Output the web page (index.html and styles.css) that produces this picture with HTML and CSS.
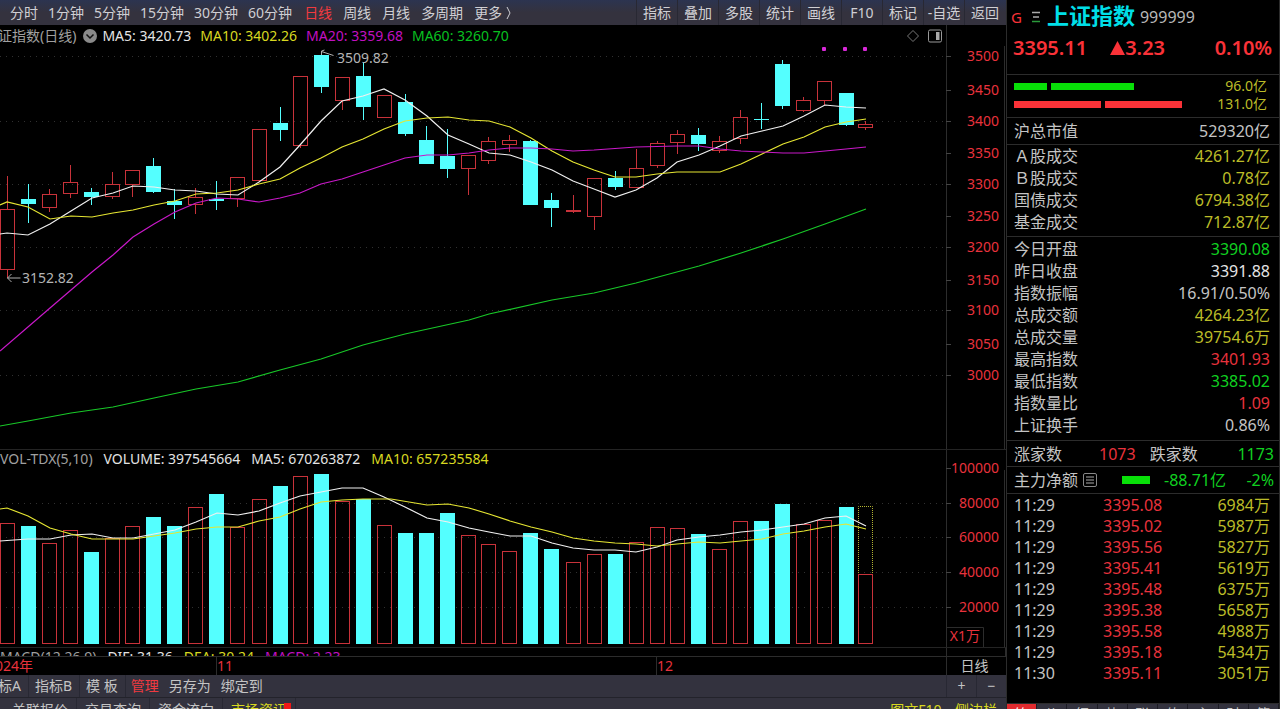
FILE: index.html
```html
<!DOCTYPE html>
<html lang="zh-CN">
<head>
<meta charset="utf-8">
<title>上证指数 999999</title>
<link rel="stylesheet" href="styles.css">
</head>
<body>
<div class="app">
  <main class="main">
    <nav class="toolbar">
      <div class="periods">
        <button>分时</button><button>1分钟</button><button>5分钟</button><button>15分钟</button><button>30分钟</button><button>60分钟</button>
      </div>
      <div class="periods periods-long">
        <button class="active">日线</button><button>周线</button><button>月线</button><button>多周期</button><button class="more">更多
          <svg width="6" height="14" viewBox="0 0 6 14"><path d="M1 1l3 6-3 6" fill="none" stroke="currentColor"/></svg></button>
      </div>
      <div class="tools">
        <button>指标</button><button>叠加</button><button>多股</button><button>统计</button><button>画线</button><button>F10</button><button>标记</button><button>-自选</button><button>返回</button>
      </div>
    </nav>

    <section class="panel price-panel">
      <header class="legend">
        <div class="legend-items shifted">
          <span class="dim">上证指数(日线)</span>
          <button class="fold" aria-label="展开">
            <svg width="14" height="14" viewBox="0 0 14 14"><circle cx="7" cy="7" r="7" fill="#8a8a8a"/><path d="M3.5 5.5L7 9l3.500-3.500" fill="none" stroke="#111" stroke-width="1.500"/></svg>
          </button>
          <span class="white">MA5: 3420.73</span>
          <span class="yellow">MA10: 3402.26</span>
          <span class="magenta">MA20: 3359.68</span>
          <span class="green">MA60: 3260.70</span>
        </div>
        <div class="legend-icons">
          <svg width="14" height="14" viewBox="0 0 14 14"><path d="M7 1.500L12.500 7 7 12.500 1.500 7z" fill="none" stroke="#777"/></svg>
          <svg width="14" height="14" viewBox="0 0 14 14"><rect x="0.500" y="1" width="13" height="12" rx="1.500" fill="none" stroke="#999"/><rect x="8" y="3" width="3.500" height="8" fill="#aaa"/></svg>
        </div>
        <div class="axis-gap"></div>
      </header>
      <svg id="price" class="chart" viewBox="0 46 1006 403"></svg>
    </section>

    <section class="panel volume-panel">
      <header class="legend">
        <div class="legend-items">
          <span class="dim">VOL-TDX(5,10)</span>
          <span class="white">VOLUME: 397545664</span>
          <span class="white">MA5: 670263872</span>
          <span class="yellow">MA10: 657235584</span>
        </div>
        <div class="axis-gap"></div>
      </header>
      <svg id="volume" class="chart" viewBox="0 470 1006 177"></svg>
    </section>

    <section class="panel macd-panel">
      <header class="legend">
        <div class="legend-items">
          <span class="dim">MACD(12,26,9)</span>
          <span class="white">DIF: 31.36</span>
          <span class="yellow">DEA: 30.24</span>
          <span class="magenta">MACD: 2.23</span>
        </div>
        <div class="axis-gap boxed"></div>
      </header>
    </section>

    <div class="dates">
      <div class="date-track">
        <span class="date year">2024年</span><span class="date nov">11</span><span class="date dec">12</span>
      </div>
      <div class="date-unit">日线</div>
    </div>

    <nav class="strip indicators">
      <div class="strip-items">
        <button class="clipped">指标A</button><button>指标B</button><button>模 板</button><button class="active">管理</button><button>另存为</button><button>绑定到</button>
      </div>
      <div class="zoomers"><button>+</button><button>−</button></div>
    </nav>
    <nav class="strip pages">
      <div class="page-items">
        <button>关联报价</button><button>交易查询</button><button>资金流向</button><button class="yellow news">市场资讯<i class="badge"></i></button>
      </div>
      <div class="page-items page-right"><button class="yellow">图文F10</button><button class="yellow">侧边栏</button></div>
    </nav>
  </main>

  <aside class="side">
    <header class="quote">
      <div class="quote-name">
        <span class="flag">G</span>
        <svg width="10" height="12" viewBox="0 0 10 12"><path d="M1 1.500h8M2 6h6" stroke="#aaa" stroke-width="1.300"/><path d="M1 10.500h8" stroke="#2a9a3a" stroke-width="1.500"/></svg>
        <h1>上证指数</h1><span class="code">999999</span>
      </div>
      <div class="quote-price">
        <span>3395.11</span><span class="change"><svg width="15" height="14" viewBox="0 0 15 14"><path d="M7.500 0L15 14H0z" fill="currentColor"/></svg>3.23</span><span class="percent">0.10%</span>
      </div>
    </header>
    <section class="flows">
      <div class="flow"><i class="bar g1"></i><i class="bar g2"></i><span>96.0亿</span></div>
      <div class="flow"><i class="bar r1"></i><i class="bar r2"></i><span>131.0亿</span></div>
    </section>
    <section class="block single">
      <table><tr><th>沪总市值</th><td>529320亿</td></tr></table>
    </section>
    <section class="block">
      <table>
        <tr><th>Ａ股成交</th><td class="olive">4261.27亿</td></tr>
        <tr><th>Ｂ股成交</th><td class="olive">0.78亿</td></tr>
        <tr><th>国债成交</th><td class="olive">6794.38亿</td></tr>
        <tr><th>基金成交</th><td class="olive">712.87亿</td></tr>
      </table>
    </section>
    <section class="block">
      <table>
        <tr><th>今日开盘</th><td class="lime">3390.08</td></tr>
        <tr><th>昨日收盘</th><td class="white">3391.88</td></tr>
        <tr><th>指数振幅</th><td>16.91/0.50%</td></tr>
        <tr><th>总成交额</th><td class="olive">4264.23亿</td></tr>
        <tr><th>总成交量</th><td class="olive">39754.6万</td></tr>
        <tr><th>最高指数</th><td class="red">3401.93</td></tr>
        <tr><th>最低指数</th><td class="lime">3385.02</td></tr>
        <tr><th>指数量比</th><td class="red">1.09</td></tr>
        <tr><th>上证换手</th><td>0.86%</td></tr>
      </table>
    </section>
    <section class="counts">
      <span>涨家数</span><span class="red up">1073</span><span class="fall">跌家数</span><span class="lime end">1173</span>
    </section>
    <section class="counts net">
      <span>主力净额</span>
      <svg width="14" height="14" viewBox="0 0 14 14"><rect x="0.500" y="0.500" width="13" height="13" rx="1.500" fill="none" stroke="#888"/><path d="M3 4h8M3 7h8M3 10h8" stroke="#aaa"/></svg>
      <i class="net-bar"></i><span class="lime net-value">-88.71亿</span><span class="lime end">-2%</span>
    </section>
    <section class="ticks">
      <table>
        <tr><td>11:29</td><td class="red">3395.08</td><td class="olive">6984万</td></tr>
        <tr><td>11:29</td><td class="red">3395.02</td><td class="olive">5987万</td></tr>
        <tr><td>11:29</td><td class="red">3395.56</td><td class="olive">5827万</td></tr>
        <tr><td>11:29</td><td class="red">3395.41</td><td class="olive">5619万</td></tr>
        <tr><td>11:29</td><td class="red">3395.48</td><td class="olive">6375万</td></tr>
        <tr><td>11:29</td><td class="red">3395.38</td><td class="olive">5658万</td></tr>
        <tr><td>11:29</td><td class="red">3395.58</td><td class="olive">4988万</td></tr>
        <tr><td>11:29</td><td class="red">3395.18</td><td class="olive">5434万</td></tr>
        <tr><td>11:30</td><td class="red">3395.11</td><td class="olive">3051万</td></tr>
      </table>
    </section>
    <nav class="side-tabs">
      <button class="on">笔</button><button>价</button><button>细</button><button>势</button><button>联</button><button>值</button><button>主</button><button>财</button><button>筹</button>
    </nav>
  </aside>
</div>
<script src="chart.js"></script>
</body>
</html>
```
FILE: styles.css
```css
* { box-sizing: border-box; }
body {
  margin: 0;
  background: #000;
  color: #c4c4c4;
  font: 14px/20px "Noto Sans", "Noto Sans CJK SC", sans-serif;
}
button {
  padding: 0;
  border: 0;
  background: none;
  color: inherit;
  font: inherit;
  white-space: nowrap;
  cursor: pointer;
}
table { width: 100%; border-collapse: collapse; }
th, td { padding: 0; font-weight: 400; text-align: left; white-space: nowrap; }
svg { flex: none; }

.app {
  display: grid;
  grid-template-columns: minmax(0, 1fr) 274px;
  height: 100vh;
  overflow: hidden;
}
.main { display: flex; flex-direction: column; min-width: 0; overflow: hidden; }
.main > * { flex: none; }

.white { color: #e4e4e4; }
.dim { color: #a0a0a0; }
.yellow { color: #d8d820; }
.magenta { color: #c010c0; }
.green { color: #08c020; }
.red { color: #e8323c; }
.lime { color: #10d020; }
.olive { color: #bcbc28; }

/* top toolbar */
.toolbar {
  display: flex;
  height: 25px;
  background: linear-gradient(#2c3450, #34323e 50%);
  color: #cfcfd4;
}
.periods { display: flex; gap: 10px; padding-left: 10px; }
.periods-long { gap: 11px; padding-left: 12px; }
.more { display: flex; align-items: center; gap: 4px; }
.active { color: #f03a40; }
.tools { display: flex; margin-left: auto; padding-right: 1px; }
.tools button { width: 41px; border-left: 1px solid #282833; }

/* chart panels */
.panel { border-top: 1px solid #242424; }
.price-panel { border-top: 0; }
.legend { display: flex; height: 21px; line-height: 20px; }
.legend-items { display: flex; align-items: center; gap: 11px; flex: 1; min-width: 0; white-space: nowrap; }
.shifted { gap: 9px; margin-left: -16px; }
.fold { display: flex; margin: 0 -4px 0 -2px; }
.legend-icons { display: flex; align-items: center; gap: 8px; padding-right: 4px; }
.axis-gap { width: 60px; border-left: 1px solid #2c2c2c; }
.chart { display: block; width: 100%; height: auto; overflow: visible; }
.chart text { font-size: 14px; }
.volume-panel .legend { height: 20px; line-height: 18px; align-items: flex-start; }
.volume-panel .axis-gap { height: 20px; }
.macd-panel { height: 9px; overflow: hidden; }
.macd-panel .legend { height: 17px; line-height: 16px; }
.boxed { border-right: 1px solid #2c2c2c; }

/* date axis */
.dates { display: flex; height: 19px; border-top: 1px solid #2c2c2c; line-height: 18px; }
.date-track { display: flex; flex: 1; overflow: hidden; color: #e8323c; }
.year { flex: 0 0 216px; text-indent: -13px; }
.nov { flex: 0 0 440px; border-left: 1px solid #2c2c2c; }
.dec { border-left: 1px solid #2c2c2c; }
.date-unit { width: 60px; padding-right: 4px; border-left: 1px solid #2c2c2c; text-align: center; }

/* bottom strips */
.strip { display: flex; height: 23px; background: #33323e; border-bottom: 1px solid #23232b; line-height: 22px; }
.strip-items { display: flex; flex: 1; }
.strip-items button { padding: 0 5px; }
.strip-items button:nth-child(-n+3) { padding: 0 7px 0 6px; border-right: 1px solid #282833; }
.strip-items .clipped { margin-left: -22px; }
.zoomers { display: flex; width: 60px; }
.zoomers button { flex: 1; border-left: 1px solid #282833; }
.pages { justify-content: space-between; height: 25px; line-height: 24px; }
.page-items { display: flex; padding-left: 4px; }
.page-items button { width: 73px; border-right: 1px solid #282833; }
.page-items .news { position: relative; }
.badge { position: absolute; top: 5px; right: 4px; width: 7px; height: 7px; background: #f01818; }
.page-right button { width: 60px; border-right: 0; }

/* quote sidebar */
.side {
  display: flex;
  flex-direction: column;
  overflow: hidden;
  border-left: 1px solid #2c2c2c;
  border-right: 1px solid #2c2c2c;
  font-size: 16px;
  line-height: 22px;
}
.side > * { flex: none; border-bottom: 1px solid #2c2c2c; }
.quote { height: 75px; color: #fa3238; }
.quote-name { display: flex; align-items: center; gap: 9px; height: 33px; padding-left: 4px; }
.flag { font-size: 15px; }
h1 { margin: 0 0 0 -3px; padding-bottom: 5px; color: #00dfe8; font: 700 22px/28px "Noto Sans CJK SC", sans-serif; }
.code { margin-left: -4px; color: #b8b8b8; }
.quote-price { display: flex; align-items: center; height: 30px; padding: 0 7px 0 6px; font-size: 20px; font-weight: 600; }
.change { display: flex; align-items: center; margin-left: 23px; }
.percent { margin-left: auto; }
.flows { display: flex; flex-direction: column; height: 43px; padding: 2px 12px 0 7px; font-size: 14px; color: #bcbc28; }
.flow { display: flex; gap: 4px; align-items: center; height: 18px; }
.flow span { margin-left: auto; }
.bar { height: 7px; background: #08e008; }
.g1 { width: 33px; }
.g2 { width: 83px; }
.r1, .r2 { background: #fa3238; }
.r1 { width: 87px; }
.r2 { width: 77px; }
.block { padding: 2px 9px 2px 7px; }
.block + .block { padding-top: 0; padding-bottom: 3px; }
.block + .block + .block { padding-top: 1px; padding-bottom: 4px; }
.block td { text-align: right; }
.block td, .block th { height: 22px; }
.counts { display: flex; align-items: center; height: 26px; padding: 0 5px 0 7px; }
.up { margin-left: 37px; }
.fall { margin-left: 14px; }
.end { margin-left: auto; }
.net { height: 27px; }
.net svg { margin-left: 5px; }
.net-bar { width: 28px; height: 8px; margin-left: 25px; background: #08e008; }
.net-value { margin-left: 14px; }
.ticks { flex: 1; padding: 1px 9px 0 7px; }
.ticks td { height: 21px; line-height: 21px; }
.ticks td:nth-child(1) { width: 89px; }
.ticks td:nth-child(2) { width: 90px; }
.ticks td:nth-child(3) { text-align: right; }
.side-tabs { display: flex; height: 5px; overflow: hidden; border: 0; background: #33323e; font-size: 14px; line-height: 20px; }
.side-tabs button { flex: 1; height: 20px; border-right: 1px solid #1c1c24; }
.side-tabs .on { background: #e02a2e; color: #fff; }
```
FILE: chart.js
```js
const RED = '#c8323a', CYAN = '#54ffff', GRID = '#2c2c2c';

// x, kind (1 = rise, 0 = fall), high, body top, body bottom, low, volume top
const days = [
  [7,1,176,209,270,278,523],[28,0,184,199,204,223,526],[49,1,189,194,208,212,543],[70,1,165,182,194,198,530],
  [91,0,188,192,197,205,552],[112,1,172,184,197,199,538],[132,1,170,170,185,197,526],[153,0,158,166,192,193,517],
  [174,0,189,201,205,219,526],[195,1,188,197,205,214,507],[216,0,181,199,201,210,494],[237,1,177,177,199,207,527],
  [259,1,129,129,181,181,499],[280,0,107,123,130,141,486],[300,1,76,76,146,148,476],[321,0,52,55,87,93,474],
  [342,1,77,77,101,110,501],[363,0,63,76,107,120,499],[384,1,95,95,118,118,525],[405,0,94,102,134,136,533],
  [426,0,126,140,164,164,533],[447,0,129,156,169,178,513],[468,1,155,155,169,195,535],[488,1,137,141,161,164,544],
  [509,1,135,140,145,152,551],[530,0,140,141,205,205,533],[551,0,193,200,208,227,549],[573,1,195,210,212,213,562],
  [594,1,178,178,217,230,554],[615,0,171,178,187,190,554],[636,1,149,168,188,188,542],[657,1,141,143,166,168,527],
  [677,1,130,134,143,154,528],[698,0,128,135,144,151,534],[719,1,136,141,151,153,549],[740,1,110,117,139,144,521],
  [761,0,103,119,120,129,521],[782,0,60,64,106,109,504],[803,1,97,100,111,112,524],[824,1,81,81,101,105,520],
  [846,0,93,93,125,126,507],[865,1,121,124,128,130,574]
];

const priceLines = {
  '#f0f0f0': '0,234 7,233 28,235 50,224 71,211 92,198 113,193 133,186 154,187 175,190 196,191 217,194 238,195 259,182 280,167 300,145 321,121 342,101 363,96 384,89 405,100 427,116 448,135 469,144 489,153 510,155 531,162 552,170 573,181 594,189 615,197 636,190 657,178 677,162 699,155 720,146 741,136 762,131 783,126 804,116 825,105 846,107 866,108',
  '#e6e632': '0,205 7,202 28,207 50,219 71,216 92,217 113,213 133,210 154,205 175,201 196,194 217,193 238,190 259,184 280,179 300,168 321,158 342,147 363,139 384,129 405,121 427,118 448,117 469,120 489,121 510,127 531,138 552,151 573,162 594,170 615,177 636,177 657,174 677,172 720,172 741,164 762,154 783,144 804,137 825,127 846,122 866,119',
  '#c818c8': '0,351 50,308 71,290 92,272 113,255 133,237 154,224 175,212 196,203 217,198 238,199 259,202 280,198 300,193 321,184 342,179 363,172 384,165 405,158 427,155 448,155 469,153 489,150 510,148 531,148 552,149 573,151 594,150 636,147 677,146 699,146 720,149 741,151 762,152 783,153 804,153 825,151 846,149 866,147',
  '#18c828': '0,426 28,421 71,413 113,407 154,398 196,389 238,382 280,370 321,359 363,345 405,334 469,320 489,314 552,300 594,293 636,283 699,266 741,253 783,239 825,224 866,209'
};
const volumeLines = {
  '#f0f0f0': '0,541 28,539 50,539 71,535 92,534 113,538 133,538 154,534 175,530 196,522 217,513 238,515 259,511 280,503 300,496 321,492 342,488 363,488 384,497 405,507 427,518 448,522 469,528 489,532 510,536 531,536 552,543 573,548 594,550 615,550 636,552 657,547 677,540 699,537 720,535 741,532 762,530 783,527 804,524 825,518 846,516 866,526',
  '#e6e632': '0,509 7,508 28,516 50,528 71,534 92,539 133,539 154,536 175,533 196,529 217,527 238,527 259,521 280,517 300,509 321,502 342,500 363,499 391,499 427,505 448,504 469,508 489,514 510,521 531,527 552,532 573,538 594,541 615,543 636,544 657,546 677,544 699,542 720,543 741,541 762,539 783,534 804,531 825,527 846,524 866,529'
};

const line = (x1, y1, x2, y2, color, extra = '') =>
  `<path d="M${x1} ${y1}L${x2} ${y2}" stroke="${color}" ${extra}/>`;
const body = (x, top, bottom, rise) => rise
  ? `<rect x="${x - 6.5}" y="${top + 0.5}" width="14" height="${Math.max(bottom - top - 1, 1)}" fill="none" stroke="${RED}"/>`
  : `<rect x="${x - 7}" y="${top}" width="15" height="${Math.max(bottom - top, 1)}" fill="${CYAN}"/>`;
const lines = set => Object.entries(set).map(([color, points]) =>
  `<polyline points="${points}" fill="none" stroke="${color}" stroke-width="1.2"/>`).join('');
const label = (x, y, text, color, anchor = 'end') =>
  `<text x="${x}" y="${y + 5}" fill="${color}" text-anchor="${anchor}">${text}</text>`;

function axis(top, bottom, ticks, first) {
  let out = line(946.5, top, 946.5, bottom, GRID) + line(1004.5, top, 1004.5, bottom, GRID);
  ticks.forEach(([y, text], i) => {
    if (i >= first && (first || i % 2 === 0)) out += line(0, y + 0.5, 946, y + 0.5, '#303030', 'stroke-dasharray="1 5"');
    out += line(946, y + 0.5, 951, y + 0.5, '#444') + label(999, y, text, '#e8323c');
  });
  return out;
}

const priceTicks = [[56,3500],[90,3450],[121,3400],[153,3350],[184,3300],[216,3250],[247,3200],[280,3150],[310,3100],[344,3050],[375,3000]];
let price = axis(46, 449, priceTicks, 0);
for (const [x, rise, high, top, bottom, low] of days) {
  const color = rise ? RED : CYAN;
  price += line(x + 0.5, high, x + 0.5, top, color) + line(x + 0.5, bottom, x + 0.5, low, color) + body(x, top, bottom, rise);
}
price += lines(priceLines);
for (const x of [822, 843, 863]) price += `<rect x="${x}" y="47" width="4" height="4" rx="1" fill="#d828d8"/>`;
price += '<path d="M321.500 55v-4l3-1M321.500 51.500l12 4M7.500 278h13M11.500 274l-4 4 4 4" fill="none" stroke="#b0b0b0"/>';
price += label(337, 58, '3509.82', '#b4b4b4', 'start') + label(22, 278, '3152.82', '#b4b4b4', 'start');
document.getElementById('price').innerHTML = price;

const volumeTicks = [[468,100000],[503,80000],[537,60000],[572,40000],[607,20000]];
let volume = axis(470, 647, volumeTicks, 1);
for (const [x, rise, , , , , top] of days) volume += body(x, top, 644, rise);
volume += '<path d="M858.500 573V506.500h14V573" fill="none" stroke="#b4b432" stroke-dasharray="1 1"/>';
volume += lines(volumeLines);
volume += `<path d="M946 627.500h37.500V647" fill="none" stroke="${GRID}"/>` + label(980, 636, 'X1万', '#e8323c');
document.getElementById('volume').innerHTML = volume;
```
